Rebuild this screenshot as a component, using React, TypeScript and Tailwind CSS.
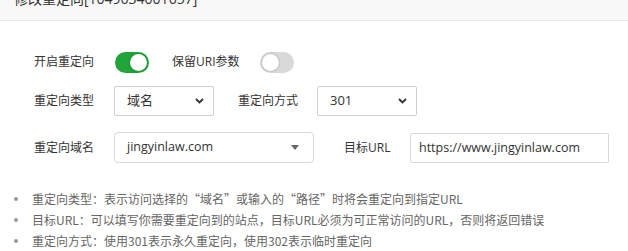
import { useState } from 'react';

function Toggle({ on, onClick }: { on: boolean; onClick: () => void }) {
  return (
    <button
      type="button"
      onClick={onClick}
      className={`relative w-[34px] h-[21px] rounded-full transition-colors ${
        on ? 'bg-[#20a53a]' : 'bg-[#d9d9d9]'
      }`}
    >
      <span
        className={`absolute top-[2px] w-[17px] h-[17px] rounded-full bg-white shadow-[0_0_2px_rgba(0,0,0,0.35)] ${
          on ? 'left-[15px]' : 'left-[2px]'
        }`}
      />
    </button>
  );
}

function Chevron() {
  return (
    <svg width="9" height="6" viewBox="0 0 9 6" className="shrink-0">
      <path d="M1 1l3.5 3.5L8 1" fill="none" stroke="#333" strokeWidth="1.8" />
    </svg>
  );
}

function NativeSelect({ value }: { value: string }) {
  return (
    <div className="flex items-center justify-between w-[100px] h-[30px] border border-[#cfcfcf] rounded-[2px] pl-[12px] pr-[9px] text-[13px] text-[#333]">
      <span>{value}</span>
      <Chevron />
    </div>
  );
}

const tips = [
  '重定向类型：表示访问选择的“域名”或输入的“路径”时将会重定向到指定URL',
  '目标URL：可以填写你需要重定向到的站点，目标URL必须为可正常访问的URL，否则将返回错误',
  '重定向方式：使用301表示永久重定向，使用302表示临时重定向',
];

export default function App() {
  const [enabled, setEnabled] = useState(true);
  const [keepUri, setKeepUri] = useState(false);

  return (
    <div className="w-[628px] h-[251px] overflow-hidden bg-white font-['Open_Sans','Noto_Sans_CJK_SC',sans-serif]">
      <div className="-mt-[22px] h-[43px] bg-[#f8f8f8] border-b border-[#e9e9e9] pl-[14px] leading-[42px] text-[14px] text-[#333]">
        修改重定向[1049634001657]
      </div>

      <div className="pl-[34px] pt-[26px] text-[12px] text-[#333]">
        <div className="flex items-center h-[30px]">
          <span className="w-[81px]">开启重定向</span>
          <Toggle on={enabled} onClick={() => setEnabled(!enabled)} />
          <span className="ml-[23px] w-[88px]">保留URI参数</span>
          <Toggle on={keepUri} onClick={() => setKeepUri(!keepUri)} />
        </div>

        <div className="flex items-center mt-[9px]">
          <span className="w-[80px]">重定向类型</span>
          <NativeSelect value="域名" />
          <span className="ml-[24px] w-[79px]">重定向方式</span>
          <NativeSelect value="301" />
        </div>

        <div className="flex items-center mt-[16px]">
          <span className="w-[80px]">重定向域名</span>
          <div className="flex items-center justify-between w-[200px] h-[31px] border border-[#d8d8d8] rounded-[4px] pl-[12px] pr-[14px] text-[12.5px] text-[#333]">
            <span>jingyinlaw.com</span>
            <span className="w-0 h-0 border-l-[4px] border-r-[4px] border-t-[5px] border-l-transparent border-r-transparent border-t-[#666]" />
          </div>
          <span className="ml-[30px] w-[66px]">目标URL</span>
          <input
            defaultValue="https://www.jingyinlaw.com"
            className="w-[199px] h-[30px] border border-[#d8d8d8] rounded-[2px] px-[8px] text-[12.5px] text-[#333] outline-none"
          />
        </div>
      </div>

      <ul className="mt-[25px] pl-[14px] text-[12px] text-[#666] font-['Noto_Sans_CJK_SC',sans-serif]">
        {tips.map((t) => (
          <li key={t} className="flex items-center h-[21px]">
            <span className="w-[4px] h-[4px] rounded-full bg-[#999] shrink-0" />
            <span className="ml-[14px] whitespace-nowrap">{t}</span>
          </li>
        ))}
      </ul>
    </div>
  );
}
